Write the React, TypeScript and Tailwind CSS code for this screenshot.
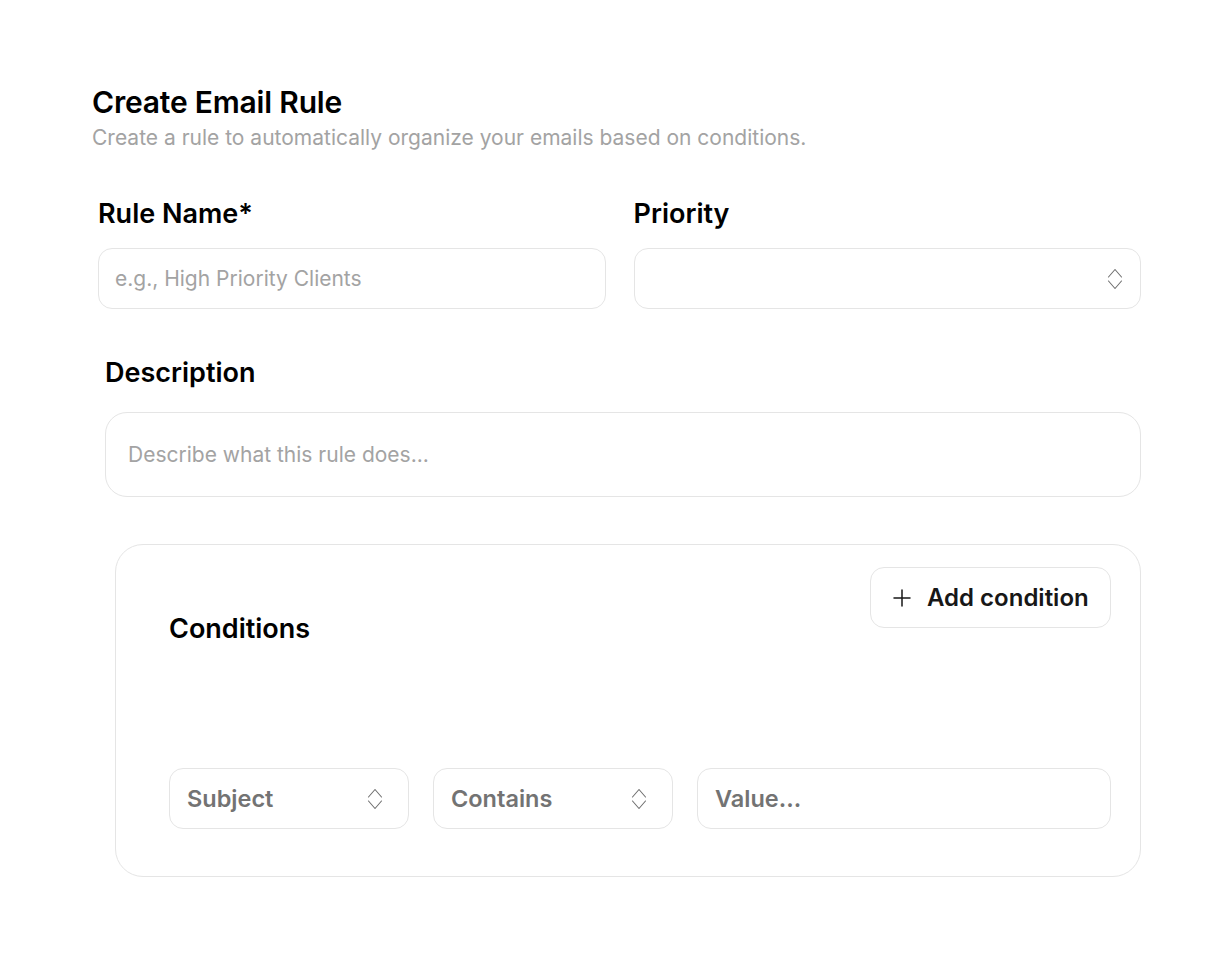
import React from "react";

function UpDown({ className = "" }: { className?: string }) {
  return (
    <svg width="18" height="26" viewBox="0 0 18 26" fill="none" className={className}>
      <path d="M2.5 11 L9 3.5 L15.5 11" stroke="#707070" strokeWidth="1.1" strokeLinejoin="round" strokeLinecap="round" />
      <path d="M2.5 15 L9 22.5 L15.5 15" stroke="#707070" strokeWidth="1.1" strokeLinejoin="round" strokeLinecap="round" />
    </svg>
  );
}

export default function App() {
  const font = { fontFamily: "Inter, 'Noto Sans', sans-serif" };
  return (
    <div className="min-h-[960px] w-[1212px] bg-white pl-[92px] pr-[71px] pt-[84px] text-black" style={font}>
      <h1 className="text-[30px] font-semibold leading-[36px] tracking-[-0.2px]">Create Email Rule</h1>
      <p className="mt-[4px] text-[21px] leading-[28px] text-[#a3a3a3]">
        Create a rule to automatically organize your emails based on conditions.
      </p>

      <div className="ml-[6px] mt-[46px] grid grid-cols-2 gap-[28px]">
        <div className="flex flex-col gap-[18px]">
          <label className="text-[27px] font-semibold leading-[32px]">Rule Name*</label>
          <div className="flex h-[61px] items-center rounded-[14px] border border-[#e5e5e5] px-[16px] pt-[1px] text-[21px] text-[#a3a3a3]">
            e.g., High Priority Clients
          </div>
        </div>
        <div className="flex flex-col gap-[18px]">
          <label className="text-[27px] font-semibold leading-[32px]">Priority</label>
          <div className="flex h-[61px] items-center justify-end rounded-[14px] border border-[#e5e5e5] pr-[16px]">
            <UpDown />
          </div>
        </div>
      </div>

      <div className="ml-[13px] mt-[48px] flex flex-col gap-[23px]">
        <label className="text-[27px] font-semibold leading-[32px]">Description</label>
        <div className="flex h-[85px] items-center rounded-[22px] border border-[#e5e5e5] px-[22px] pt-[1px] text-[21px] text-[#a3a3a3]">
          Describe what this rule does...
        </div>
      </div>

      <div className="ml-[23px] mt-[47px] rounded-[28px] border border-[#e5e5e5] pb-[47px] pl-[53px] pr-[29px] pt-[22px]">
        <div className="flex items-start justify-between">
          <h2 className="mt-[46px] text-[27px] font-semibold leading-[32px]">Conditions</h2>
          <button className="flex h-[61px] w-[241px] items-center gap-[16px] rounded-[14px] border border-[#e5e5e5] pl-[22px] text-[24px] font-semibold text-[#171717]">
            <svg width="18" height="18" viewBox="0 0 18 18" fill="none">
              <path d="M9 1 V17 M1 9 H17" stroke="#171717" strokeWidth="1.5" strokeLinecap="round" />
            </svg>
            Add condition
          </button>
        </div>
        <div className="mt-[123px] flex gap-[24px]">
          <div className="flex h-[61px] w-[240px] items-center justify-between rounded-[14px] border border-[#e5e5e5] pl-[17px] pr-[24px] text-[23.5px] font-semibold text-[#737373]">
            Subject
            <UpDown />
          </div>
          <div className="flex h-[61px] w-[240px] items-center justify-between rounded-[14px] border border-[#e5e5e5] pl-[17px] pr-[24px] text-[23.5px] font-semibold text-[#737373]">
            Contains
            <UpDown />
          </div>
          <div className="flex h-[61px] flex-1 items-center rounded-[14px] border border-[#e5e5e5] pl-[17px] text-[23.5px] font-semibold text-[#737373]">
            Value...
          </div>
        </div>
      </div>
    </div>
  );
}
